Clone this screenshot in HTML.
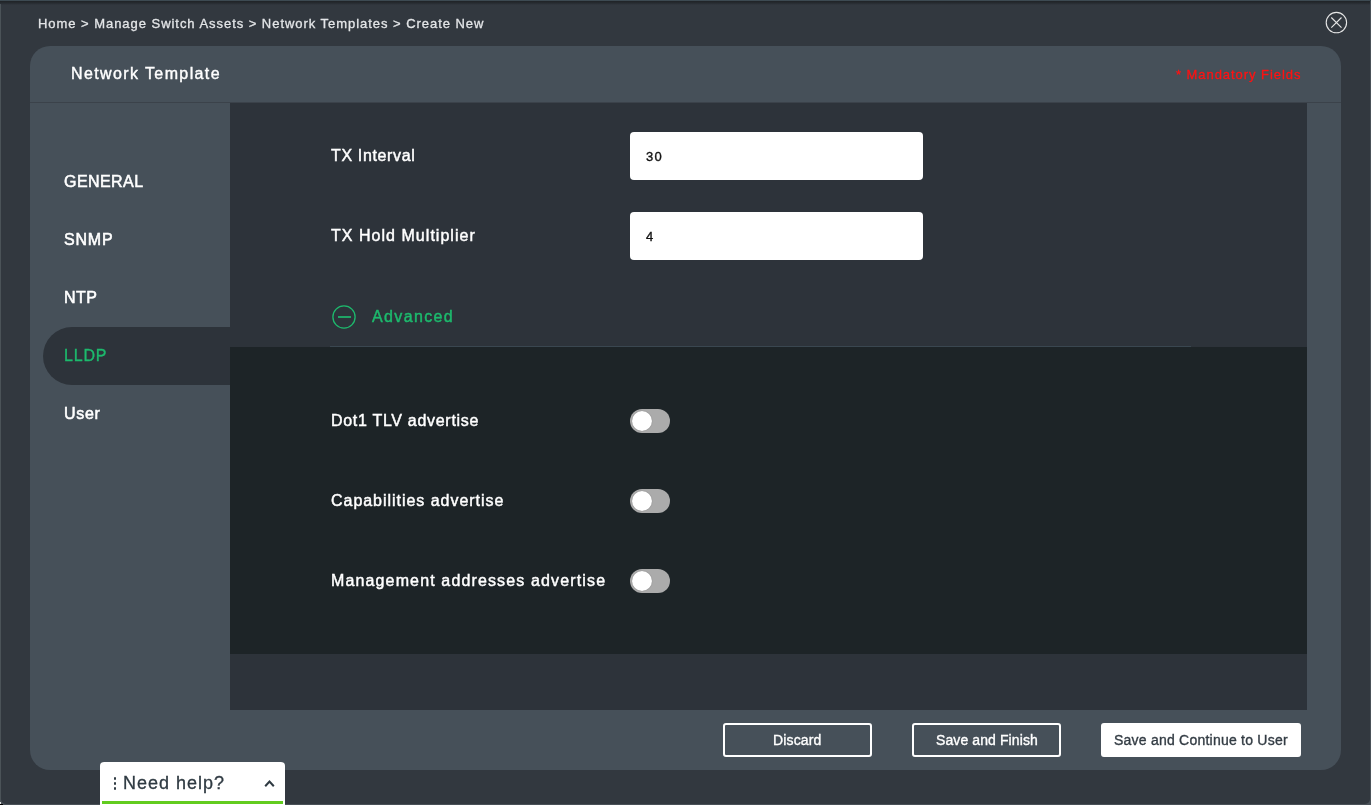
<!DOCTYPE html>
<html>
<head>
<meta charset="utf-8">
<style>
*{box-sizing:border-box;margin:0;padding:0}
html,body{width:1371px;height:805px;overflow:hidden;background:#4a5158;font-family:"Liberation Sans",sans-serif;position:relative}
div,span,svg{position:absolute}
.t{white-space:nowrap;line-height:1;will-change:transform}
#modal{left:1px;top:1px;width:1369px;height:803px;background:#32383f;border-radius:0 0 5px 5px;overflow:hidden}
#topshade{left:0;top:1px;width:1370px;height:4px;background:linear-gradient(#1f2327,#262b30 50%,#32383f)}
#topline{left:0;top:0;width:1371px;height:1px;background:#3d4a52}
#leftline{left:0;top:4px;width:1px;height:801px;background:#4b5358}
#card{left:30px;top:46px;width:1311px;height:724px;background:#465059;border-radius:20px}
#hline{left:30px;top:102px;width:1311px;height:1px;background:#3b424a}
#content{left:230px;top:103px;width:1077px;height:607px;background:#2d333a}
#bl1{left:0;top:802px;width:1px;height:2px;background:#ddd}
#bl2{left:0;top:804px;width:3px;height:1px;background:#000}
#pill{left:43px;top:327px;width:187px;height:58px;background:#2d333a;border-radius:29px 0 0 29px}
.inp{width:293px;height:48px;background:#fff;border-radius:4px}
#divl{left:330px;top:346px;width:861px;height:1px;background:#3a4750}
#dark{left:230px;top:347px;width:1077px;height:307px;background:#1d2427}
.tog{left:630px;width:40px;height:24px;background:#ababab;border-radius:12px}
.tog:after{content:"";position:absolute;left:2px;top:2px;width:20px;height:20px;border-radius:50%;background:#fff;box-shadow:0 0 1px rgba(0,0,0,.4)}
.btn{top:723px;height:34px;border:2px solid #fff;border-radius:3px}
#help{left:100px;top:762px;width:185px;height:43px;background:#fff;border-radius:4px 4px 0 0}
#helpbar{left:102px;top:801px;width:181px;height:2.6px;background:#62cc1f}
.dot{width:2.4px;height:2.4px;border-radius:50%;background:#2f3a42;left:113.8px}
</style>
</head>
<body>
<div id="modal"></div>
<div id="topshade"></div><div id="topline"></div><div id="leftline"></div>
<svg style="left:1325px;top:11px;width:23px;height:23px" viewBox="0 0 23 23"><circle cx="11.4" cy="11.6" r="10.2" fill="none" stroke="#e6e6e6" stroke-width="1.1"/><path d="M6.3 6.5L16.5 16.7M16.5 6.5L6.3 16.7" stroke="#e6e6e6" stroke-width="1.1"/></svg>
<div id="card"></div>
<div id="hline"></div>
<div id="content"></div>
<div id="pill"></div>
<div class="inp" style="left:630px;top:132px"></div>
<div class="inp" style="left:630px;top:212px"></div>
<svg style="left:332px;top:305px;width:24px;height:24px" viewBox="0 0 24 24"><circle cx="12" cy="12" r="11.1" fill="none" stroke="#1dba6d" stroke-width="1.3"/><path d="M6 12H19" stroke="#1dba6d" stroke-width="1.7"/></svg>
<div id="divl"></div>
<div id="dark"></div>
<div class="tog" style="top:409px"></div>
<div class="tog" style="top:489px"></div>
<div class="tog" style="top:569px"></div>
<div class="btn" style="left:723px;width:149px"></div>
<div class="btn" style="left:912px;width:149px"></div>
<div class="btn" style="left:1101px;width:200px;background:#fff"></div>
<div id="help"></div>
<div id="helpbar"></div><div id="bl1"></div><div id="bl2"></div>
<div class="dot" style="top:777.2px"></div><div class="dot" style="top:782.4px"></div><div class="dot" style="top:787.3px"></div>
<svg style="left:262px;top:778px;width:15px;height:12px" viewBox="0 0 15 12"><path d="M3.2 8.3L7.5 3.6L11.8 8.3" fill="none" stroke="#2f3a42" stroke-width="2"/></svg>
<span class="t" id="t_crumb" style="left:37.70px;top:16.70px;font-size:13px;letter-spacing:0.959px;color:#e4e6e8;-webkit-text-stroke:0.3px #e4e6e8;">Home &gt; Manage Switch Assets &gt; Network Templates &gt; Create New</span>
<span class="t" id="t_nt" style="left:71.40px;top:66.40px;font-size:16px;letter-spacing:1.390px;color:#ffffff;-webkit-text-stroke:0.4px #ffffff;">Network Template</span>
<span class="t" id="t_mand" style="left:1176.30px;top:67.90px;font-size:13px;letter-spacing:0.943px;color:#ff1212;-webkit-text-stroke:0.3px #ff1212;">* Mandatory Fields</span>
<span class="t" id="t_gen" style="left:63.70px;top:174.00px;font-size:16px;letter-spacing:0.433px;color:#ffffff;-webkit-text-stroke:0.55px #ffffff;">GENERAL</span>
<span class="t" id="t_snmp" style="left:63.70px;top:232.20px;font-size:16px;letter-spacing:0.783px;color:#ffffff;-webkit-text-stroke:0.55px #ffffff;">SNMP</span>
<span class="t" id="t_ntp" style="left:63.80px;top:290.20px;font-size:16px;letter-spacing:0.400px;color:#ffffff;-webkit-text-stroke:0.55px #ffffff;">NTP</span>
<span class="t" id="t_lldp" style="left:63.80px;top:348.20px;font-size:16px;letter-spacing:0.800px;color:#1dba6d;-webkit-text-stroke:0.35px #1dba6d;">LLDP</span>
<span class="t" id="t_user" style="left:63.80px;top:406.00px;font-size:16px;letter-spacing:0.683px;color:#ffffff;-webkit-text-stroke:0.55px #ffffff;">User</span>
<span class="t" id="t_txi" style="left:330.80px;top:148.20px;font-size:16px;letter-spacing:0.643px;color:#ffffff;-webkit-text-stroke:0.45px #ffffff;">TX Interval</span>
<span class="t" id="t_txh" style="left:330.80px;top:227.90px;font-size:16px;letter-spacing:1.032px;color:#ffffff;-webkit-text-stroke:0.45px #ffffff;">TX Hold Multiplier</span>
<span class="t" id="t_30" style="left:645.90px;top:150.40px;font-size:13px;letter-spacing:1.200px;color:#111111;-webkit-text-stroke:0.35px #111111;">30</span>
<span class="t" id="t_4" style="left:645.90px;top:230.40px;font-size:13px;letter-spacing:0.000px;color:#111111;-webkit-text-stroke:0.35px #111111;">4</span>
<span class="t" id="t_adv" style="left:372.00px;top:309.40px;font-size:16px;letter-spacing:1.368px;color:#1dba6d;-webkit-text-stroke:0.45px #1dba6d;">Advanced</span>
<span class="t" id="t_dot1" style="left:330.50px;top:413.10px;font-size:16px;letter-spacing:0.700px;color:#ffffff;-webkit-text-stroke:0.45px #ffffff;">Dot1 TLV advertise</span>
<span class="t" id="t_cap" style="left:330.50px;top:492.70px;font-size:16px;letter-spacing:0.965px;color:#ffffff;-webkit-text-stroke:0.45px #ffffff;">Capabilities advertise</span>
<span class="t" id="t_mgmt" style="left:330.50px;top:573.00px;font-size:16px;letter-spacing:1.138px;color:#ffffff;-webkit-text-stroke:0.45px #ffffff;">Management addresses advertise</span>
<span class="t" id="t_disc" style="left:773.30px;top:733.40px;font-size:14px;letter-spacing:0.150px;color:#ffffff;-webkit-text-stroke:0.35px #ffffff;">Discard</span>
<span class="t" id="t_saf" style="left:935.60px;top:733.40px;font-size:14px;letter-spacing:0.102px;color:#ffffff;-webkit-text-stroke:0.35px #ffffff;">Save and Finish</span>
<span class="t" id="t_sac" style="left:1114.10px;top:733.10px;font-size:14px;letter-spacing:0.228px;color:#333c44;-webkit-text-stroke:0.35px #333c44;">Save and Continue to User</span>
<span class="t" id="t_help" style="left:122.90px;top:774.00px;font-size:18px;letter-spacing:0.997px;color:#2f3a42;-webkit-text-stroke:0.3px #2f3a42;">Need help?</span>
</body>
</html>
